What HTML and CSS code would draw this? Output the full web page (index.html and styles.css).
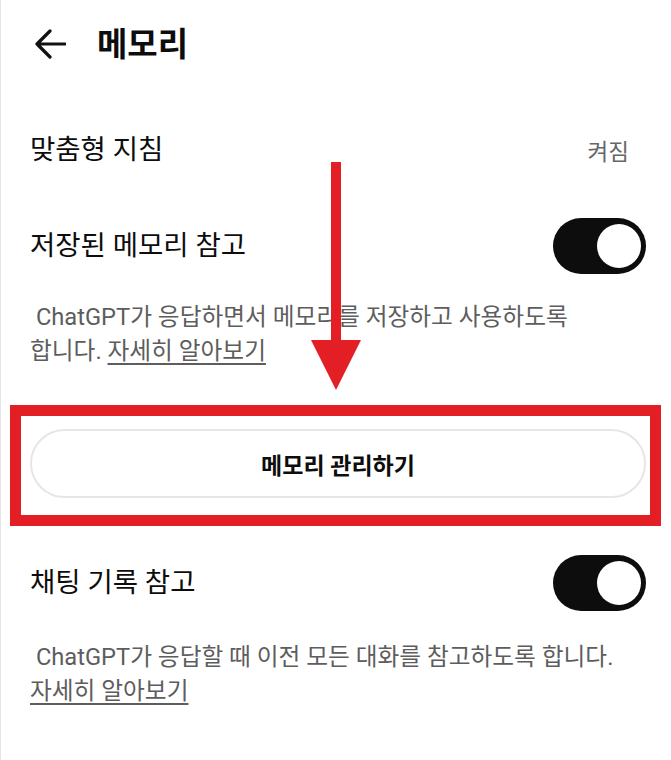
FILE: index.html
```html
<!DOCTYPE html>
<html lang="ko">
<head>
    <meta charset="UTF-8">
    <meta name="viewport" content="width=device-width, initial-scale=1.0">
    <title>메모리</title>
    <link rel="stylesheet" href="styles.css">
</head>
<body>
    <div class="page">
        <header class="header">
            <svg class="back" viewBox="0 0 32 30" width="32" height="30">
                <path d="M31 15 H3 M16 2 L3 15 L16 28" fill="none" stroke="#111" stroke-width="3.2" stroke-linecap="round" stroke-linejoin="round"/>
            </svg>
            <h1>메모리</h1>
        </header>

        <div class="row row-plain">
            <span class="label">맞춤형 지침</span>
            <span class="value">켜짐</span>
        </div>

        <div class="row row-toggle">
            <span class="label">저장된 메모리 참고</span>
            <div class="toggle on"><span class="knob"></span></div>
        </div>
        <p class="desc desc-first">&nbsp;ChatGPT가 응답하면서 메모리를 저장하고 사용하도록 합니다. <a href="#">자세히 알아보기</a></p>

        <!-- 강조 표시 박스 -->
        <div class="highlight">
            <button class="manage">메모리 관리하기</button>
        </div>

        <div class="row row-toggle row-chat">
            <span class="label">채팅 기록 참고</span>
            <div class="toggle on"><span class="knob"></span></div>
        </div>
        <p class="desc">&nbsp;ChatGPT가 응답할 때 이전 모든 대화를 참고하도록 합니다. <a href="#">자세히 알아보기</a></p>

        <!-- 아래 방향 화살표 -->
        <svg class="pointer" viewBox="0 0 50 228" width="50" height="228">
            <rect x="20" y="0" width="10" height="180" fill="#e31e24"/>
            <polygon points="0,178 50,178 25,228" fill="#e31e24"/>
        </svg>
    </div>
</body>
</html>
```

FILE: styles.css
```css
body {
    margin: 0;
    background: #fff;
    font-family: Roboto, "Noto Sans CJK KR", sans-serif;
    color: #0d0d0d;
}
.page {
    position: relative;
    min-height: 760px;
    border-left: 1px solid #e6e6e6;
    padding: 0 25px 0 29px;
    box-sizing: border-box;
}
.header {
    height: 88px;
    display: flex;
    align-items: center;
    gap: 31px;
    padding-left: 4px;
}
.back {
    display: block;
}
h1 {
    margin: 0;
    font-size: 33px;
    font-weight: 700;
    line-height: 1;
}
.row {
    display: flex;
    align-items: center;
    justify-content: space-between;
}
.row-plain {
    height: 64px;
    margin-top: 30px;
}
.row-toggle {
    height: 56px;
    margin-top: 36px;
}
.row-chat {
    margin-top: 29px;
}
.label {
    font-size: 27.5px;
    line-height: 1;
}
.value {
    font-size: 22.5px;
    color: #666;
    margin-right: 17px;
}
.toggle {
    width: 93px;
    height: 56px;
    border-radius: 28px;
    background: #0d0d0d;
    display: flex;
    align-items: center;
    justify-content: flex-end;
    padding: 0 5px;
    box-sizing: border-box;
}
.knob {
    width: 44px;
    height: 44px;
    border-radius: 50%;
    background: #fff;
}
.desc {
    margin: 26px 0 0;
    max-width: 596px;
    font-size: 23.7px;
    line-height: 34px;
    color: #5d5d5d;
    word-break: keep-all;
}
.desc a {
    color: #5d5d5d;
    text-decoration: underline;
    text-underline-offset: 4px;
}
.row-chat + .desc {
    margin-top: 29px;
}
.highlight {
    margin: 37px -15px 0 -20px;
    border: 11px solid #e31e24;
    padding: 13px 4px 17px 9px;
}
.manage {
    display: block;
    width: 100%;
    height: 69px;
    border: 2px solid #e6e6e6;
    border-radius: 35px;
    background: #fff;
    font-family: Roboto, "Noto Sans CJK KR", sans-serif;
    font-size: 23px;
    font-weight: 700;
    color: #0d0d0d;
}
.pointer {
    position: absolute;
    left: 310px;
    top: 162px;
}
```
